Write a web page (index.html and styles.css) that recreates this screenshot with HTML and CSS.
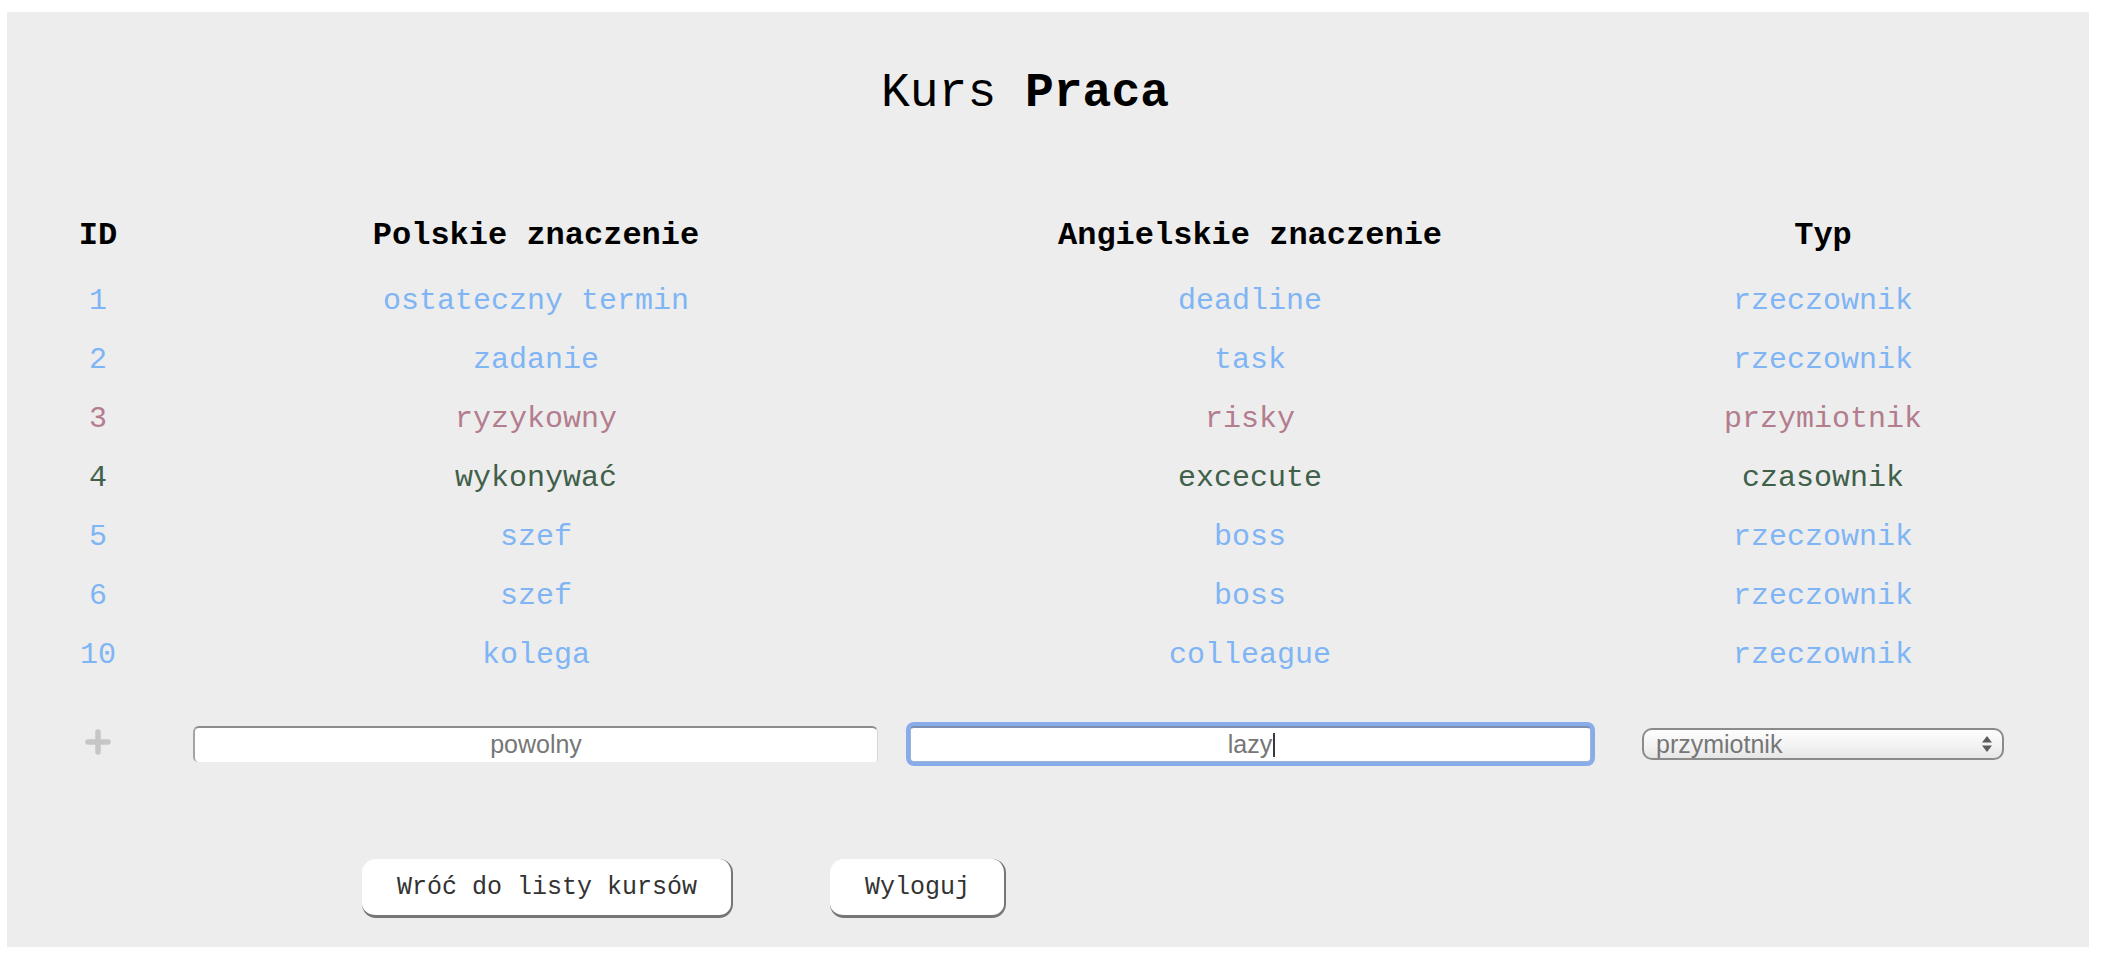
FILE: index.html
```html
<!DOCTYPE html>
<html lang="pl">
<head>
<meta charset="utf-8">
<title>Kurs Praca</title>
<link rel="stylesheet" href="styles.css">
</head>
<body>
<div class="page">
  <h1 class="title">Kurs <b>Praca</b></h1>
  <div class="table">
    <div class="row head">
      <div>ID</div><div>Polskie znaczenie</div><div>Angielskie znaczenie</div><div>Typ</div>
    </div>
    <div class="row noun"><div>1</div><div>ostateczny termin</div><div>deadline</div><div>rzeczownik</div></div>
    <div class="row noun"><div>2</div><div>zadanie</div><div>task</div><div>rzeczownik</div></div>
    <div class="row adj"><div>3</div><div>ryzykowny</div><div>risky</div><div>przymiotnik</div></div>
    <div class="row verb"><div>4</div><div>wykonywać</div><div>excecute</div><div>czasownik</div></div>
    <div class="row noun"><div>5</div><div>szef</div><div>boss</div><div>rzeczownik</div></div>
    <div class="row noun"><div>6</div><div>szef</div><div>boss</div><div>rzeczownik</div></div>
    <div class="row noun"><div>10</div><div>kolega</div><div>colleague</div><div>rzeczownik</div></div>
    <div class="row add">
      <div class="plus-cell">
        <svg class="plus" width="26" height="26" viewBox="0 0 26 26"><path d="M13 3V23M3 13H23" stroke="#c6c6c6" stroke-width="5.5" stroke-linecap="round" fill="none"/></svg>
      </div>
      <div class="cell"><input class="field" type="text" value="powolny"></div>
      <div class="cell">
        <div class="field-wrap">
          <input class="field focused" type="text" value="lazy">
          <span class="caret"></span>
        </div>
      </div>
      <div class="cell">
        <div class="select-wrap">
          <select class="select"><option>przymiotnik</option><option>rzeczownik</option><option>czasownik</option></select>
          <svg class="arrows" width="10" height="16" viewBox="0 0 10 16"><path d="M5 0L10 6.5H0Z M0 9.5H10L5 16Z" fill="#5c5c5c"/></svg>
        </div>
      </div>
    </div>
  </div>
  <div class="actions">
    <button class="btn" type="button">Wróć do listy kursów</button>
    <button class="btn" type="button">Wyloguj</button>
  </div>
</div>
</body>
</html>
```
FILE: styles.css
```css
html, body {
  margin: 0;
  padding: 0;
  background: #ffffff;
}

body {
  font-family: "Liberation Mono", "Courier New", monospace;
  color: #000;
}

.page {
  box-sizing: border-box;
  height: 935px;
  margin: 12px 13px 9px 7px;
  padding: 53px 49px 0 11px;
  background: #ededed;
}

.title {
  margin: 0;
  padding-right: 8px;
  font-size: 48px;
  line-height: 56px;
  font-weight: normal;
  text-align: center;
}

.title b {
  font-weight: bold;
}

.table {
  margin-top: 85px;
}

.row {
  display: grid;
  grid-template-columns: 160px 716px 712px 434px;
  height: 59px;
  align-items: center;
  text-align: center;
  font-size: 30px;
  white-space: nowrap;
}

.row.head {
  font-size: 32px;
  font-weight: bold;
  color: #000;
  margin-bottom: 6px;
}

.row.noun { color: #80b5f5; }
.row.adj { color: #b37d8d; }
.row.verb { color: #40604a; }

.row.add {
  margin-top: 30px;
}

.plus-cell {
  display: flex;
  justify-content: center;
  align-items: center;
  padding-bottom: 4px;
}

.plus {
  display: block;
}

.cell {
  display: flex;
  justify-content: center;
  align-items: center;
}

.field {
  box-sizing: border-box;
  width: 685px;
  height: 36px;
  margin: 0 1px 0 0;
  padding: 0 6px;
  border: 0;
  border-top: 2px solid #8c8c8c;
  border-left: 2px solid #a4a4a4;
  border-right: 1px solid #d6d6d6;
  border-radius: 6px 6px 3px 5px;
  background: #ffffff;
  font-family: "Liberation Sans", Arial, sans-serif;
  font-size: 25px;
  color: #767676;
  text-align: center;
  outline: none;
}

.field-wrap {
  position: relative;
}

.field.focused {
  width: 681px;
  margin: 0;
  border-top: 2px solid #7d8fae;
  border-left: 1px solid #9fb3d6;
  border-right: 1px solid #9fb3d6;
  border-bottom: 1px solid #9fb3d6;
  border-radius: 4px;
  box-shadow: 0 0 0 4px #88abea;
}

.caret {
  position: absolute;
  left: calc(50% + 23px);
  top: 7px;
  width: 2px;
  height: 24px;
  background: #3a3a3a;
}

.select-wrap {
  position: relative;
  width: 362px;
}

.select {
  display: block;
  box-sizing: border-box;
  width: 362px;
  height: 32px;
  margin: 0;
  padding: 0 30px 0 12px;
  appearance: none;
  -webkit-appearance: none;
  border: 2px solid #8b8b8b;
  border-radius: 10px;
  background: linear-gradient(#fdfdfd, #f3f3f3 55%, #e6e6e6);
  font-family: "Liberation Sans", Arial, sans-serif;
  font-size: 25px;
  line-height: 28px;
  color: #767676;
}

.arrows {
  position: absolute;
  right: 12px;
  top: 8px;
}

.actions {
  display: flex;
  gap: 97px;
  margin-top: 86px;
  padding-left: 344px;
}

.btn {
  box-sizing: border-box;
  height: 59px;
  padding: 0 34px 0 35px;
  border: 0;
  border-right: 2px solid #757575;
  border-bottom: 3px solid #757575;
  border-radius: 14px;
  background: #ffffff;
  font-family: "Liberation Mono", "Courier New", monospace;
  font-size: 25px;
  color: #333333;
  cursor: pointer;
}
```
